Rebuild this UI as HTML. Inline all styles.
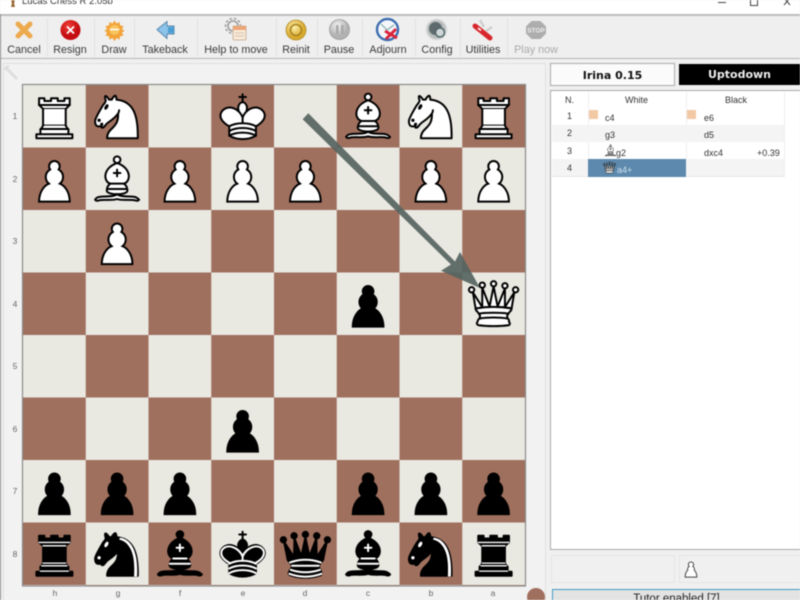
<!DOCTYPE html>
<html>
<head>
<meta charset="utf-8">
<title>Lucas Chess</title>
<style>
html,body{margin:0;padding:0;width:800px;height:600px;overflow:hidden;background:#f0f0f0;}
body{position:relative;font-family:"Liberation Sans",sans-serif;color:#222;filter:blur(.4px);}
.abs{position:absolute;}
.tb{position:absolute;top:43px;font-size:10.8px;line-height:14px;color:#3a3a3a;white-space:nowrap;transform:translateX(-50%);}
.sep{position:absolute;top:18px;width:1px;height:39px;background:#e2e2e2;}
.cell{position:absolute;font-size:9px;line-height:12px;color:#333;white-space:nowrap;}
.rank,.file{position:absolute;font-size:8.5px;line-height:10px;color:#666;transform:translate(-50%,-50%);}
</style>
</head>
<body>
<!-- title bar -->
<div class="abs" style="left:0;top:0;width:800px;height:14px;background:#fff;overflow:hidden;">
  <div class="abs" style="left:22px;top:-4px;font-size:9.5px;line-height:12px;color:#333;">Lucas Chess R 2.05b</div>
  <svg class="abs" style="left:8px;top:0" width="10" height="8"><path d="M5 0C3 0 3 2 4 3L3 7H7L6 3C7 2 7 0 5 0Z" fill="#9a6a35"/></svg>
  <div class="abs" style="left:718px;top:2px;width:8px;height:1px;background:#444;"></div>
  <div class="abs" style="left:750px;top:-4px;width:6px;height:8px;border:1px solid #444;"></div>
  <svg class="abs" style="left:783px;top:0" width="9" height="6"><path d="M1-2 7 5M7-2 1 5" stroke="#444" fill="none"/></svg>
</div>
<div class="abs" style="left:0;top:14px;width:800px;height:2px;background:#bdbdbd;"></div>
<div class="abs" style="left:0;top:16px;width:800px;height:42px;background:#efefef;"></div>
<div class="abs" style="left:0;top:58px;width:800px;height:1px;background:#b5b5b5;"></div>
<div class="abs" style="left:0;top:14px;width:1px;height:586px;background:#888;"></div>

<div class="sep" style="left:47px"></div><div class="sep" style="left:94px"></div><div class="sep" style="left:134px"></div><div class="sep" style="left:197px"></div><div class="sep" style="left:276px"></div><div class="sep" style="left:317px"></div><div class="sep" style="left:362px"></div><div class="sep" style="left:415px"></div><div class="sep" style="left:460px"></div><div class="sep" style="left:507px"></div>

<div class="tb" style="left:24px">Cancel</div>
<div class="tb" style="left:70px">Resign</div>
<div class="tb" style="left:114px">Draw</div>
<div class="tb" style="left:165px">Takeback</div>
<div class="tb" style="left:236px">Help to move</div>
<div class="tb" style="left:296px">Reinit</div>
<div class="tb" style="left:339px">Pause</div>
<div class="tb" style="left:388px">Adjourn</div>
<div class="tb" style="left:437px">Config</div>
<div class="tb" style="left:483px">Utilities</div>
<div class="tb" style="left:536px;color:#aaa">Play now</div>

<!-- side frame -->
<div class="abs" style="left:3px;top:63px;width:541px;height:540px;border:1px solid #e0e0e0;background:#f2f2f2;"></div>

<!-- right panel -->
<div class="abs" style="left:550px;top:63px;width:123px;height:21px;background:#fbfbfb;border:1px solid #aaa;text-align:center;font-family:'DejaVu Sans',sans-serif;font-weight:bold;font-size:11px;line-height:23px;color:#111;">Irina 0.15</div>
<div class="abs" style="left:679px;top:64px;width:121px;height:21px;background:#000;text-align:center;font-family:'DejaVu Sans',sans-serif;font-weight:bold;font-size:11px;line-height:22px;color:#eee;">Uptodown</div>

<div class="abs" style="left:550px;top:90px;width:250px;height:460px;background:#fff;border:1px solid #aaa;border-right:none;box-sizing:border-box;"></div>
<div class="abs" style="left:588px;top:92px;width:1px;height:85px;background:#eee;"></div>
<div class="abs" style="left:686px;top:92px;width:1px;height:85px;background:#eee;"></div>
<div class="abs" style="left:784px;top:92px;width:1px;height:85px;background:#eee;"></div>
<div class="abs" style="left:552px;top:125px;width:232px;height:17px;background:#f4f4f4;"></div>
<div class="abs" style="left:552px;top:159px;width:232px;height:18px;background:#f4f4f4;border-bottom:1px solid #e6e6e6;box-sizing:border-box;"></div>
<div class="abs" style="left:588px;top:159px;width:98px;height:18px;background:#5c89ad;"></div>
<div class="abs" style="left:589px;top:110px;width:9px;height:9px;background:#f3c8a4;"></div>
<div class="abs" style="left:687px;top:110px;width:9px;height:9px;background:#f3c8a4;"></div>

<div class="cell" style="left:565px;top:94px">N.</div>
<div class="cell" style="left:625px;top:94px">White</div>
<div class="cell" style="left:725px;top:94px">Black</div>
<div class="cell" style="left:567px;top:110px">1</div>
<div class="cell" style="left:567px;top:127px">2</div>
<div class="cell" style="left:567px;top:145px">3</div>
<div class="cell" style="left:567px;top:162px">4</div>
<div class="cell" style="left:605px;top:112px">c4</div>
<div class="cell" style="left:704px;top:112px">e6</div>
<div class="cell" style="left:605px;top:129px">g3</div>
<div class="cell" style="left:704px;top:129px">d5</div>
<div class="cell" style="left:616px;top:147px">g2</div>
<div class="cell" style="left:704px;top:147px">dxc4</div>
<div class="cell" style="left:757px;top:147px">+0.39</div>
<div class="cell" style="left:617px;top:164px;color:#cfe0ee">a4+</div>

<!-- bottom right -->
<div class="abs" style="left:551px;top:555px;width:122px;height:26px;border:1px solid #e4e4e4;"></div>
<div class="abs" style="left:679px;top:555px;width:121px;height:26px;border:1px solid #e4e4e4;border-right:none;"></div>
<div class="abs" style="left:552px;top:589px;width:248px;height:11px;box-sizing:border-box;border:1px solid #3f9cc7;border-bottom:none;border-right:none;background:#e3e3e3;overflow:hidden;text-align:center;font-size:11.5px;line-height:18px;color:#222;">Tutor enabled [7]</div>

<div class="rank" style="left:15px;top:116px">1</div>
<div class="rank" style="left:15px;top:179px">2</div>
<div class="rank" style="left:15px;top:241px">3</div>
<div class="rank" style="left:15px;top:304px">4</div>
<div class="rank" style="left:15px;top:366px">5</div>
<div class="rank" style="left:15px;top:429px">6</div>
<div class="rank" style="left:15px;top:491px">7</div>
<div class="rank" style="left:15px;top:554px">8</div>
<div class="file" style="left:55px;top:593px">h</div>
<div class="file" style="left:118px;top:593px">g</div>
<div class="file" style="left:180px;top:593px">f</div>
<div class="file" style="left:243px;top:593px">e</div>
<div class="file" style="left:305px;top:593px">d</div>
<div class="file" style="left:368px;top:593px">c</div>
<div class="file" style="left:431px;top:593px">b</div>
<div class="file" style="left:493px;top:593px">a</div>

<svg class="abs" style="left:0;top:0" width="800" height="600" viewBox="0 0 800 600">
<defs>
<pattern id="chk" x="23" y="85" width="125.5" height="125" patternUnits="userSpaceOnUse">
  <rect width="125.5" height="125" fill="#e9e8e1"/>
  <rect x="62.75" y="0" width="62.75" height="62.5" fill="#a0705e"/>
  <rect x="0" y="62.5" width="62.75" height="62.5" fill="#a0705e"/>
</pattern>
<symbol id="wp" viewBox="0 0 45 45"><path d="M22.5 9c-2.21 0-4 1.79-4 4 0 .89.29 1.71.78 2.38C17.33 16.5 16 18.59 16 21c0 2.03.94 3.84 2.41 5.03-3 1.06-7.41 5.55-7.41 13.47h23c0-7.92-4.41-12.41-7.41-13.47 1.47-1.19 2.41-3 2.41-5.03 0-2.41-1.33-4.5-3.28-5.62.49-.67.78-1.49.78-2.38 0-2.21-1.79-4-4-4z" fill="#fff" stroke="#000" stroke-width="1.5" stroke-linecap="round"/></symbol>
<symbol id="bp" viewBox="0 0 45 45"><path d="M22.5 9c-2.21 0-4 1.79-4 4 0 .89.29 1.71.78 2.38C17.33 16.5 16 18.59 16 21c0 2.03.94 3.84 2.41 5.03-3 1.06-7.41 5.55-7.41 13.47h23c0-7.92-4.41-12.41-7.41-13.47 1.47-1.19 2.41-3 2.41-5.03 0-2.41-1.33-4.5-3.28-5.62.49-.67.78-1.49.78-2.38 0-2.21-1.79-4-4-4z" fill="#000" stroke="#000" stroke-width="1.5" stroke-linecap="round"/></symbol>
<symbol id="wr" viewBox="0 0 45 45"><g fill="#fff" fill-rule="evenodd" stroke="#000" stroke-width="1.5" stroke-linecap="round" stroke-linejoin="round"><path d="M9 39h27v-3H9v3zM12 36v-4h21v4H12zM11 14V9h4v2h5V9h5v2h5V9h4v5" stroke-linecap="butt"/><path d="M34 14l-3 3H14l-3-3"/><path d="M31 17v12.5H14V17" stroke-linecap="butt" stroke-linejoin="miter"/><path d="M31 29.5l1.5 2.5h-20l1.5-2.5"/><path d="M11 14h23" fill="none" stroke-linejoin="miter"/></g></symbol>
<symbol id="br" viewBox="0 0 45 45"><g fill="#000" fill-rule="evenodd" stroke="#000" stroke-width="1.5" stroke-linecap="round" stroke-linejoin="round"><path d="M9 39h27v-3H9v3zM12.5 32l1.5-2.5h17l1.5 2.5h-20zM12 36v-4h21v4H12z" stroke-linecap="butt"/><path d="M14 29.5v-13h17v13H14z" stroke-linecap="butt" stroke-linejoin="miter"/><path d="M14 16.5L11 14h23l-3 2.5H14zM11 14V9h4v2h5V9h5v2h5V9h4v5H11z" stroke-linecap="butt"/><path d="M12 35.5h21M13 31.5h19M14 29.5h17M14 16.5h17M11 14h23" fill="none" stroke="#fff" stroke-width="1" stroke-linejoin="miter"/></g></symbol>
<symbol id="wn" viewBox="0 0 45 45"><g fill="none" fill-rule="evenodd" stroke="#000" stroke-width="1.5" stroke-linecap="round" stroke-linejoin="round"><path d="M22 10c10.5 1 16.5 8 16 29H15c0-9 10-6.5 8-21" fill="#fff"/><path d="M24 18c.38 2.91-5.55 7.37-8 9-3 2-2.82 4.34-5 4-1.042-.94 1.41-3.04 0-3-1 0 .19 1.23-1 2-1 0-4.003 1-4-4 0-2 6-12 6-12s1.89-1.9 2-3.5c-.73-.994-.5-2-.5-3 1-1 3 2.5 3 2.5h2s.78-1.992 2.5-3c1 0 1 3 1 3" fill="#fff"/><path d="M9.5 25.5a.5.5 0 1 1-1 0 .5.5 0 1 1 1 0zm5.433-9.75a.5 1.5 30 1 1-.866-.5.5 1.5 30 1 1 .866.5z" fill="#000"/></g></symbol>
<symbol id="bn" viewBox="0 0 45 45"><g fill="none" fill-rule="evenodd" stroke="#000" stroke-width="1.5" stroke-linecap="round" stroke-linejoin="round"><path d="M22 10c10.5 1 16.5 8 16 29H15c0-9 10-6.5 8-21" fill="#000"/><path d="M24 18c.38 2.91-5.55 7.37-8 9-3 2-2.82 4.34-5 4-1.042-.94 1.41-3.04 0-3-1 0 .19 1.23-1 2-1 0-4.003 1-4-4 0-2 6-12 6-12s1.89-1.9 2-3.5c-.73-.994-.5-2-.5-3 1-1 3 2.5 3 2.5h2s.78-1.992 2.5-3c1 0 1 3 1 3" fill="#000"/><path d="M9.5 25.5a.5.5 0 1 1-1 0 .5.5 0 1 1 1 0zm5.433-9.75a.5 1.5 30 1 1-.866-.5.5 1.5 30 1 1 .866.5z" fill="#fff" stroke="#fff"/><path d="M24.55 10.4l-.45 1.45.5.15c3.15 1 5.65 2.49 7.9 6.75S35.75 29.06 35.25 39l-.05.5h2.25l.05-.5c.5-10.06-.88-16.85-3.25-21.34-2.37-4.49-5.79-6.64-9.19-7.16l-.51-.1z" fill="#fff" stroke="none"/></g></symbol>
<symbol id="wb" viewBox="0 0 45 45"><g fill="none" fill-rule="evenodd" stroke="#000" stroke-width="1.5" stroke-linecap="round" stroke-linejoin="round"><g fill="#fff" stroke-linecap="butt"><path d="M9 36c3.39-.97 10.11.43 13.5-2 3.39 2.43 10.11 1.03 13.5 2 0 0 1.65.54 3 2-.68.97-1.65.99-3 .5-3.39-.97-10.11.46-13.5-1-3.39 1.46-10.11.03-13.5 1-1.354.49-2.323.47-3-.5 1.354-1.94 3-2 3-2z"/><path d="M15 32c2.5 2.5 12.5 2.5 15 0 .5-1.5 0-2 0-2 0-2.5-2.5-4-2.5-4 5.5-1.5 6-11.5-5-15.5-11 4-10.5 14-5 15.5 0 0-2.5 1.5-2.5 4 0 0-.5.5 0 2z"/><path d="M25 8a2.5 2.5 0 1 1-5 0 2.5 2.5 0 1 1 5 0z"/></g><path d="M17.5 26h10M15 30h15m-7.5-14.5v5M20 18h5" stroke-linejoin="miter"/></g></symbol>
<symbol id="bb" viewBox="0 0 45 45"><g fill="none" fill-rule="evenodd" stroke="#000" stroke-width="1.5" stroke-linecap="round" stroke-linejoin="round"><g fill="#000" stroke-linecap="butt"><path d="M9 36c3.39-.97 10.11.43 13.5-2 3.39 2.43 10.11 1.03 13.5 2 0 0 1.65.54 3 2-.68.97-1.65.99-3 .5-3.39-.97-10.11.46-13.5-1-3.39 1.46-10.11.03-13.5 1-1.354.49-2.323.47-3-.5 1.354-1.94 3-2 3-2z"/><path d="M15 32c2.5 2.5 12.5 2.5 15 0 .5-1.5 0-2 0-2 0-2.5-2.5-4-2.5-4 5.5-1.5 6-11.5-5-15.5-11 4-10.5 14-5 15.5 0 0-2.5 1.5-2.5 4 0 0-.5.5 0 2z"/><path d="M25 8a2.5 2.5 0 1 1-5 0 2.5 2.5 0 1 1 5 0z"/></g><path d="M17.5 26h10M15 30h15m-7.5-14.5v5M20 18h5" stroke="#fff" stroke-linejoin="miter"/></g></symbol>
<symbol id="wk" viewBox="0 0 45 45"><g fill="none" fill-rule="evenodd" stroke="#000" stroke-width="1.5" stroke-linecap="round" stroke-linejoin="round"><path d="M22.5 11.63V6M20 8h5" stroke-linejoin="miter"/><path d="M22.5 25s4.5-7.5 3-10.5c0 0-1-2.5-3-2.5s-3 2.5-3 2.5c-1.5 3 3 10.5 3 10.5" fill="#fff" stroke-linecap="butt" stroke-linejoin="miter"/><path d="M12.5 37c5.5 3.5 14.5 3.5 20 0v-7s9-4.5 6-10.5c-4-6.5-13.5-3.5-16 4V27v-3.5c-2.5-7.5-12-10.5-16-4-3 6 6 10.5 6 10.5v7" fill="#fff"/><path d="M12.5 30c5.5-3 14.5-3 20 0M12.5 33.5c5.5-3 14.5-3 20 0M12.5 37c5.5-3 14.5-3 20 0"/></g></symbol>
<symbol id="bk" viewBox="0 0 45 45"><g fill="none" fill-rule="evenodd" stroke="#000" stroke-width="1.5" stroke-linecap="round" stroke-linejoin="round"><path d="M22.5 11.63V6" stroke-linejoin="miter"/><path d="M22.5 25s4.5-7.5 3-10.5c0 0-1-2.5-3-2.5s-3 2.5-3 2.5c-1.5 3 3 10.5 3 10.5" fill="#000" stroke-linecap="butt" stroke-linejoin="miter"/><path d="M12.5 37c5.5 3.5 14.5 3.5 20 0v-7s9-4.5 6-10.5c-4-6.5-13.5-3.5-16 4V27v-3.5c-2.5-7.5-12-10.5-16-4-3 6 6 10.5 6 10.5v7" fill="#000"/><path d="M20 8h5" stroke-linejoin="miter"/><path d="M32 29.5s8.5-4 6.03-9.65C34.15 14 25 18 22.5 24.5l.01 2.1-.01-2.1C20 18 10.85 14 6.97 19.85 4.5 25.5 13 29.5 13 29.5" stroke="#fff"/><path d="M12.5 30c5.5-3 14.5-3 20 0m-20 3.5c5.5-3 14.5-3 20 0m-20 3.5c5.5-3 14.5-3 20 0" stroke="#fff"/></g></symbol>
<symbol id="wq" viewBox="0 0 45 45"><g fill="#fff" fill-rule="evenodd" stroke="#000" stroke-width="1.5" stroke-linecap="round" stroke-linejoin="round"><path d="M8 12a2 2 0 1 1-4 0 2 2 0 1 1 4 0zM24.5 7.5a2 2 0 1 1-4 0 2 2 0 1 1 4 0zM41 12a2 2 0 1 1-4 0 2 2 0 1 1 4 0zM16 8.5a2 2 0 1 1-4 0 2 2 0 1 1 4 0zM33 9a2 2 0 1 1-4 0 2 2 0 1 1 4 0z"/><path d="M9 26c8.5-1.5 21-1.5 27 0l2-12-7 11V11l-5.5 13.5-3-15-3 15-5.5-14V25L7 14l2 12z" stroke-linecap="butt"/><path d="M9 26c0 2 1.5 2 2.5 4 1 1.5 1 1 .5 3.5-1.5 1-1.5 2.5-1.5 2.5-1.5 1.5.5 2.500.5 2.5 6.500 1 16.500 1 23 0 0 0 1.500-1 0-2.500 0 0 .5-1.500-1-2.500-.5-2.500-.5-2 .5-3.500 1-2 2.500-2 2.500-4-8.500-1.500-18.500-1.500-27 0z" stroke-linecap="butt"/><path d="M11.500 30c3.500-1 18.500-1 22 0M12 33.500c6-1 15-1 21 0" fill="none"/></g></symbol>
<symbol id="bq" viewBox="0 0 45 45"><g fill="#000" fill-rule="evenodd" stroke="#000" stroke-width="1.5" stroke-linecap="round" stroke-linejoin="round"><circle cx="6" cy="12" r="2"/><circle cx="14" cy="9" r="2"/><circle cx="22.5" cy="8" r="2"/><circle cx="31" cy="9" r="2"/><circle cx="39" cy="12" r="2"/><path d="M9 26c8.5-1.5 21-1.5 27 0l2.5-12.5L31 25l-.3-14.1-5.2 13.6-3-14.5-3 14.5-5.2-13.6L14 25 6.5 13.5 9 26z" stroke-linecap="butt"/><path d="M9 26c0 2 1.5 2 2.5 4 1 1.5 1 1 .5 3.5-1.5 1-1.5 2.5-1.5 2.5-1.5 1.5.5 2.5.5 2.5 6.5 1 16.5 1 23 0 0 0 1.5-1 0-2.5 0 0 .5-1.5-1-2.5-.5-2.5-.5-2 .5-3.5 1-2 2.5-2 2.5-4-8.5-1.5-18.5-1.5-27 0z" stroke-linecap="butt"/><path d="M11 38.5a35 35 1 0 0 23 0" fill="none" stroke-linecap="butt"/><path d="M11 29a35 35 1 0 1 23 0M12.5 31.5h20M11.5 34.5a35 35 1 0 0 22 0M10.5 37.5a35 35 1 0 0 24 0" fill="none" stroke="#fff"/></g></symbol>
<radialGradient id="gold" cx=".4" cy=".35"><stop offset="0" stop-color="#fff3b0"/><stop offset="1" stop-color="#d9a92c"/></radialGradient>
<radialGradient id="grey" cx=".4" cy=".3"><stop offset="0" stop-color="#f4f4f4"/><stop offset="1" stop-color="#b2b2b2"/></radialGradient>
<radialGradient id="red" cx=".4" cy=".3"><stop offset="0" stop-color="#f0403a"/><stop offset="1" stop-color="#c40d10"/></radialGradient>
</defs>

<!-- toolbar icons -->
<path d="M18 24 30 36M30 24 18 36" stroke="#eda94e" stroke-width="5" stroke-linecap="round"/>
<circle cx="70.500" cy="30" r="10" fill="url(#red)"/>
<path d="M67 26.500l7 7M74 26.500l-7 7" stroke="#fff" stroke-width="1.800"/>
<path d="M114.500 20.500l2 3 3-1.500.6 3.400 3.400.6-1.500 3 2.500 1.800-2.500 1.800 1.500 3-3.400.6-.6 3.400-3-1.500-2 3-2-3-3 1.500-.6-3.400-3.400-.6 1.500-3-2.500-1.800 2.500-1.800-1.500-3 3.400-.6.6-3.400 3 1.500z" fill="#f2a43a"/>
<circle cx="114.500" cy="30" r="5" fill="#f8c45e"/>
<path d="M110 29.500h9" stroke="#fff" stroke-width="1.500"/>
<path d="M157 29.500 167 21.500V26H174V34H167V38.500Z" fill="#8cc3ea" stroke="#5a86ad" stroke-width="1"/>
<rect x="168" y="27" width="6" height="6" fill="#4b9fd4"/>
<g fill="none" stroke="#999" stroke-width="1.500"><circle cx="233" cy="26" r="5"/><circle cx="233" cy="26" r="7.500" stroke-dasharray="2.500 2"/></g>
<rect x="233" y="26" width="13" height="14" rx="1" fill="#fbe9d6" stroke="#c9b6a2"/>
<rect x="233" y="26" width="13" height="4" fill="#eda67a"/>
<path d="M235 33h9M235 36h9" stroke="#cfc2b4"/>
<circle cx="296" cy="30" r="10" fill="url(#gold)" stroke="#b38f2e" stroke-width=".8"/>
<circle cx="296" cy="30" r="5.500" fill="none" stroke="#a8821f" stroke-width="1.600"/>
<circle cx="339.500" cy="29.500" r="10" fill="url(#grey)" stroke="#999" stroke-width=".8"/>
<rect x="336" y="25" width="2.500" height="9" fill="#a8a8a8"/><rect x="341" y="25" width="2.500" height="9" fill="#a8a8a8"/>
<circle cx="387.500" cy="29.500" r="10.500" fill="#f4f6fa" stroke="#3d6db0" stroke-width="2.400"/>
<path d="M387 30 381 24M387 30 394 25" stroke="#8aa" stroke-width="1.200"/>
<path d="M385 31 397 38M396 29 386 39" stroke="#d9243a" stroke-width="3"/>
<circle cx="436.500" cy="29.500" r="10" fill="#b9bdbd" stroke="#d8d8d8" stroke-width="1.500"/>
<circle cx="435.500" cy="28.500" r="6.500" fill="#5f6a6d"/>
<circle cx="440" cy="32.500" r="4.500" fill="#cfd6d6" stroke="#4f6468" stroke-width="1.500"/>
<path d="M475 26 490 38" stroke="#d8272c" stroke-width="5" stroke-linecap="round"/>
<path d="M480 20 484 27M492 27 486 31" stroke="#cfcfcf" stroke-width="2.500"/>
<path d="M478 28 481 30.500" stroke="#fff" stroke-width="1.500"/>
<path d="M531.500 21h9l5.500 5.500v7l-5.500 5.500h-9l-5.500-5.500v-7z" fill="#adadad"/>
<text x="536" y="32.500" font-size="6.500" font-weight="bold" fill="#eee" text-anchor="middle" font-family="Liberation Sans, sans-serif">STOP</text>

<!-- wrench -->
<path d="M7 69 16 78" stroke="#ddd" stroke-width="3" stroke-linecap="round"/>
<path d="M5 70 6 67 9 66" stroke="#ddd" stroke-width="2" fill="none"/>

<!-- board -->
<rect x="22.500" y="84.500" width="503" height="501.500" fill="url(#chk)" stroke="#8b8b8b" stroke-width="1.200"/>

<!-- row 1 -->
<use href="#wr" x="24.400" y="86.300" width="60" height="60"/>
<use href="#wn" x="87.100" y="86.300" width="60" height="60"/>
<use href="#wk" x="212.600" y="86.300" width="60" height="60"/>
<use href="#wb" x="338.100" y="86.300" width="60" height="60"/>
<use href="#wn" x="400.900" y="86.300" width="60" height="60"/>
<use href="#wr" x="463.600" y="86.300" width="60" height="60"/>
<!-- row 2 -->
<use href="#wp" x="24.400" y="149" width="60" height="60"/>
<use href="#wb" x="87.100" y="149" width="60" height="60"/>
<use href="#wp" x="149.900" y="149" width="60" height="60"/>
<use href="#wp" x="212.600" y="149" width="60" height="60"/>
<use href="#wp" x="275.400" y="149" width="60" height="60"/>
<use href="#wp" x="400.900" y="149" width="60" height="60"/>
<use href="#wp" x="463.600" y="149" width="60" height="60"/>
<!-- row 3 -->
<use href="#wp" x="87.100" y="211.500" width="60" height="60"/>
<!-- row 4 -->
<use href="#bp" x="338.100" y="274" width="60" height="60"/>
<use href="#wq" x="463.600" y="273.800" width="60" height="60"/>
<!-- row 6 -->
<use href="#bp" x="212.600" y="399" width="60" height="60"/>
<!-- row 7 -->
<use href="#bp" x="24.400" y="461.500" width="60" height="60"/>
<use href="#bp" x="87.100" y="461.500" width="60" height="60"/>
<use href="#bp" x="149.900" y="461.500" width="60" height="60"/>
<use href="#bp" x="338.100" y="461.500" width="60" height="60"/>
<use href="#bp" x="400.900" y="461.500" width="60" height="60"/>
<use href="#bp" x="463.600" y="461.500" width="60" height="60"/>
<!-- row 8 -->
<use href="#br" x="24.400" y="523.800" width="60" height="60"/>
<use href="#bn" x="87.100" y="523.800" width="60" height="60"/>
<use href="#bb" x="149.900" y="523.800" width="60" height="60"/>
<use href="#bk" x="212.600" y="523.800" width="60" height="60"/>
<use href="#bq" x="275.400" y="523.800" width="60" height="60"/>
<use href="#bb" x="338.100" y="523.800" width="60" height="60"/>
<use href="#bn" x="400.900" y="523.800" width="60" height="60"/>
<use href="#br" x="463.600" y="523.800" width="60" height="60"/>

<!-- arrow -->
<path d="M302.700 119.300 308.300 113.300 455 261.500 460 252 480 288 441 270.700 451 264.500Z" fill="#566461" fill-opacity=".93"/>

<!-- circle -->
<circle cx="536" cy="597" r="9" fill="#a0705e"/>

<!-- table mini pieces -->
<use href="#wb" x="603" y="143" width="15" height="15"/>
<use href="#wq" x="602" y="160" width="15" height="15"/>

<!-- pawn bottom panel -->
<path d="M691 562c-1.600 0-2.600 1.200-2.600 2.600 0 .8.300 1.400.8 1.900-1.500 1-2 2.300-1.400 3.600-1.800 1.500-2.600 4-2.600 7h11.600c0-3-.8-5.500-2.600-7 .6-1.300.1-2.600-1.400-3.600.5-.5.8-1.100.8-1.900 0-1.400-1-2.600-2.600-2.600z" fill="#fff" stroke="#444" stroke-width="1"/>
</svg>
</body>
</html>
